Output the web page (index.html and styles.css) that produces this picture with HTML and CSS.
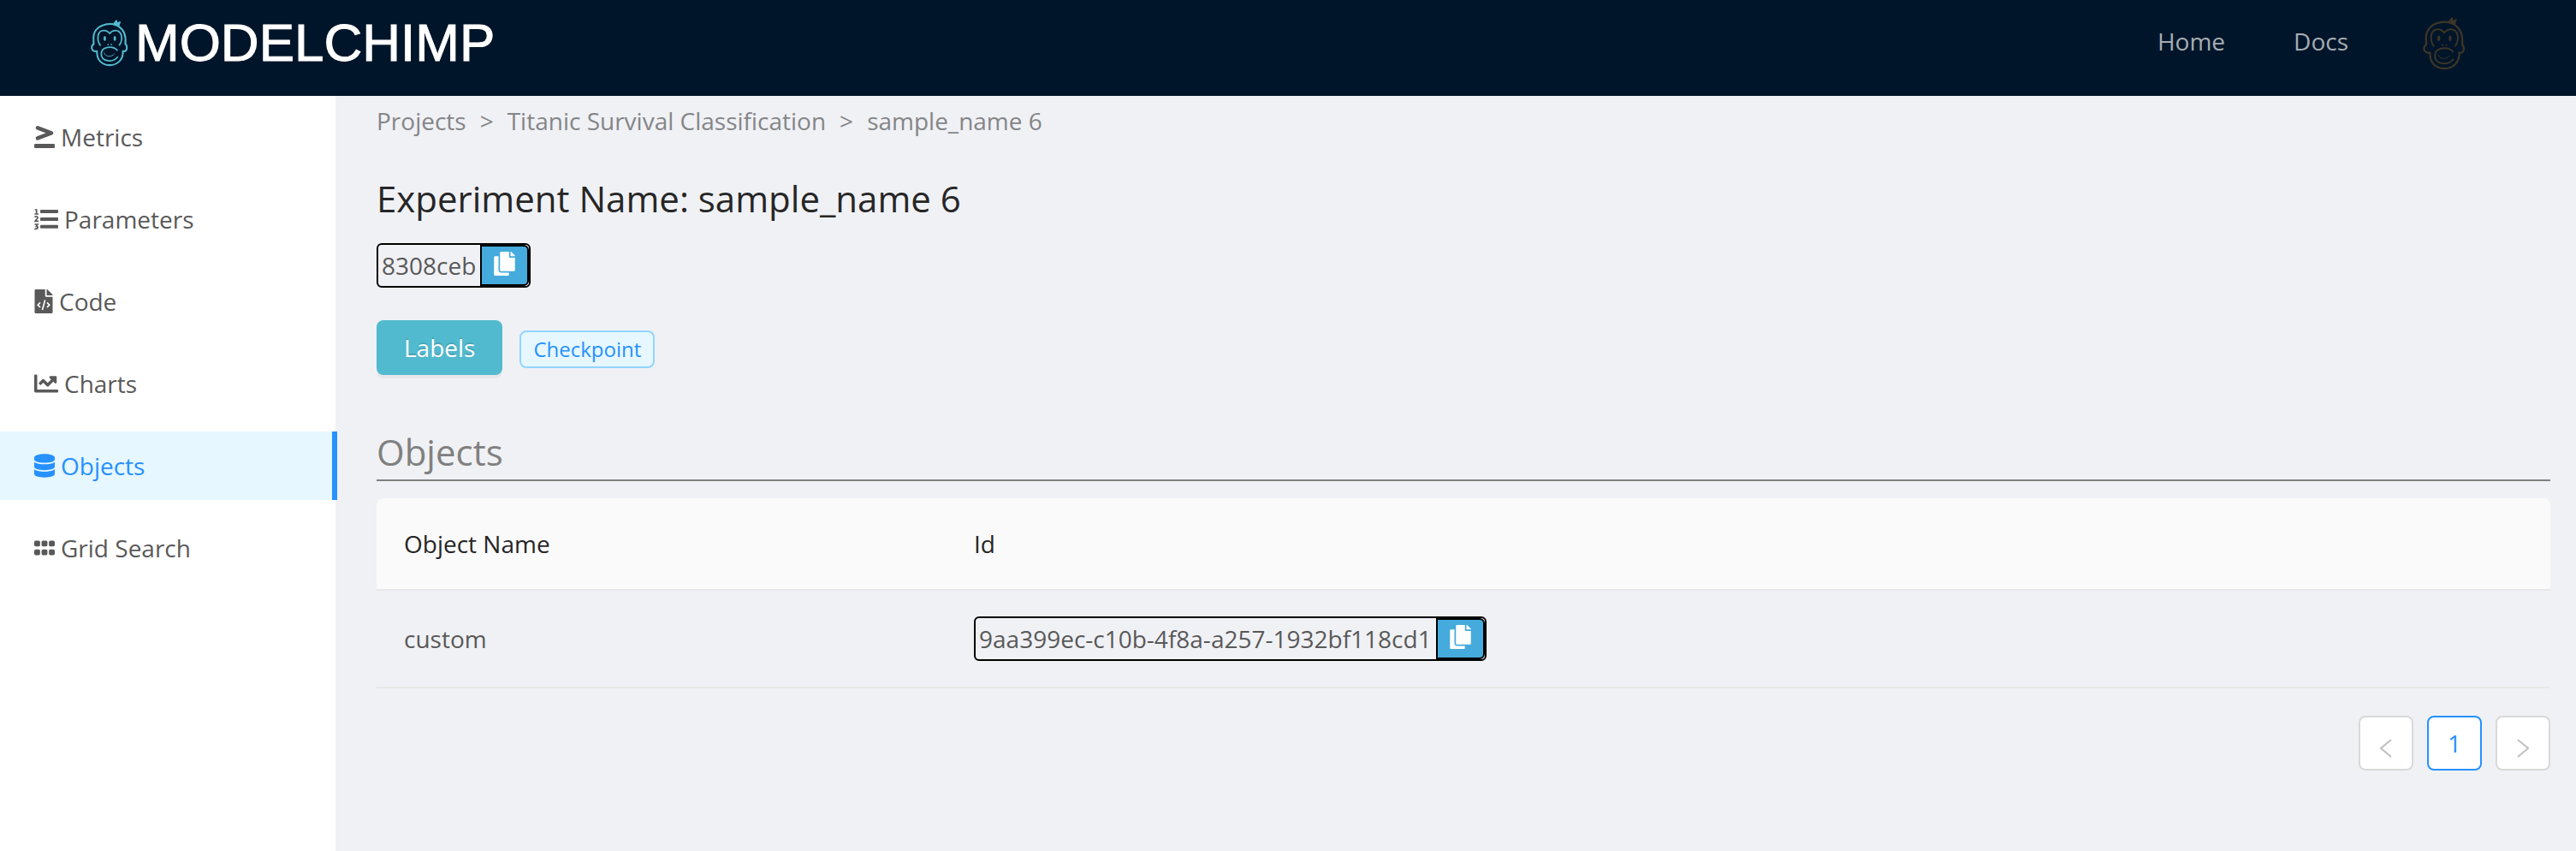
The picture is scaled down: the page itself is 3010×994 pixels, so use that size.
FILE: index.html
```html
<!DOCTYPE html>
<html lang="en">
<head>
<meta charset="utf-8">
<title>ModelChimp</title>
<link rel="stylesheet" href="styles.css">
</head>
<body>
<svg class="defs" aria-hidden="true">
  <symbol id="chimp" viewBox="0 0 150 190">
    <g fill="none" stroke="currentColor" stroke-width="7" stroke-linejoin="round">
      <path d="M92 21C84 20 66 19 52 24C26 32 10 52 11 78L12 100C4 103 4 110 4 116C6 126 14 131 25 128C23 162 44 184 75 184C106 184 131 162 128 128C138 131 144 124 144 116C144 108 142 102 138 100C142 66 134 44 110 29L115 14L104 20L102 8L92 21"/>
      <path stroke-width="6" d="M39 107C22 82 26 46 52 46C64 46 70 50 75 58C82 50 88 46 98 46C126 46 130 84 113 106"/>
      <path stroke-width="6" d="M107 126C88 104 42 110 42 139C42 172 92 175 108 150"/>
      <path stroke-width="3" d="M53 134C60 154 84 152 95 138"/>
    </g>
    <g fill="currentColor">
      <ellipse cx="56" cy="78" rx="5" ry="10"/>
      <ellipse cx="96" cy="78" rx="5" ry="10"/>
      <circle cx="69" cy="102" r="3"/>
      <circle cx="82" cy="102" r="3"/>
      <path d="M88 24L104 4L106 16L120 10L110 32Z"/>
    </g>
  </symbol>
  <symbol id="copy" viewBox="0 0 448 512">
    <path fill="currentColor" d="M320 448v40c0 13.255-10.745 24-24 24H24c-13.255 0-24-10.745-24-24V120c0-13.255 10.745-24 24-24h72v296c0 30.879 25.121 56 56 56h168zm0-344V0H152c-13.255 0-24 10.745-24 24v368c0 13.255 10.745 24 24 24h272c13.255 0 24-10.745 24-24V128H344c-13.2 0-24-10.8-24-24zm120.971-31.029L375.029 7.029A24 24 0 0 0 358.059 0H352v96h96v-6.059a24 24 0 0 0-7.029-16.97z"/>
  </symbol>
</svg>

<header class="topbar">
  <a class="brand" href="#"><svg class="brand-mark" aria-hidden="true"><use href="#chimp"/></svg><span>MODELCHIMP</span></a>
  <nav class="topnav" aria-label="Main">
    <a href="#">Home</a>
    <a href="#">Docs</a>
    <a class="avatar" href="#" aria-label="Account"><svg aria-hidden="true"><use href="#chimp"/></svg></a>
  </nav>
</header>

<div class="layout">
  <nav class="sidebar" aria-label="Experiment">
    <a class="item" href="#">
      <svg class="icon icon-md" viewBox="0 0 72 84" aria-hidden="true"><path d="M12 10L60 28L12 46" fill="none" stroke="currentColor" stroke-width="14" stroke-linecap="round" stroke-linejoin="round"/><rect y="66" width="72" height="15" rx="4" fill="currentColor"/></svg>
      Metrics</a>
    <a class="item" href="#">
      <svg class="icon icon-lg" viewBox="0 0 84 84" aria-hidden="true"><g fill="currentColor"><rect x="21" y="9" width="63" height="12" rx="3"/><rect x="21" y="36" width="63" height="12" rx="3"/><rect x="21" y="62" width="63" height="12" rx="3"/></g><path d="M2 9H8V23M1 24H15M1 34C8 31 13 33 12 38L3 49H15M1 60H12L7 67C16 67 14 78 1 76" fill="none" stroke="currentColor" stroke-width="5"/></svg>
      Parameters</a>
    <a class="item" href="#">
      <svg class="icon icon-sm" viewBox="0 0 384 512" aria-hidden="true"><path fill="currentColor" d="M384 121.941V128H256V0h6.059c6.365 0 12.47 2.529 16.971 7.029l97.941 97.941A24.005 24.005 0 0 1 384 121.941zM248 160c-13.2 0-24-10.8-24-24V0H24C10.745 0 0 10.745 0 24v464c0 13.255 10.745 24 24 24h336c13.255 0 24-10.745 24-24V160H248z"/><path d="M120 280L68 332L120 384M264 280L316 332L264 384M222 226L164 438" fill="none" stroke="#fff" stroke-width="30"/></svg>
      Code</a>
    <a class="item" href="#">
      <svg class="icon icon-lg" viewBox="0 0 512 512" aria-hidden="true"><path fill="currentColor" d="M496 384H64V80c0-8.84-7.16-16-16-16H16C7.16 64 0 71.16 0 80v336c0 17.67 14.33 32 32 32h464c8.84 0 16-7.16 16-16v-32c0-8.84-7.16-16-16-16zM464 96H345.94c-21.38 0-32.09 25.85-16.97 40.97l32.4 32.4L288 242.75l-73.37-73.37c-12.5-12.5-32.76-12.5-45.25 0l-68.69 68.69c-6.25 6.25-6.25 16.38 0 22.63l22.62 22.62c6.25 6.25 16.38 6.25 22.63 0L192 237.25l73.37 73.37c12.5 12.5 32.76 12.5 45.25 0l96-96 32.4 32.4c15.12 15.12 40.97 4.41 40.97-16.97V112c.01-8.84-7.15-16-15.99-16z"/></svg>
      Charts</a>
    <a class="item item-active" href="#" aria-current="page">
      <svg class="icon icon-md" viewBox="0 0 448 512" aria-hidden="true"><path fill="currentColor" d="M448 73.143v45.714C448 159.143 347.667 192 224 192S0 159.143 0 118.857V73.143C0 32.857 100.333 0 224 0s224 32.857 224 73.143zM448 176v102.857C448 319.143 347.667 352 224 352S0 319.143 0 278.857V176c48.125 33.143 136.208 48.572 224 48.572S399.874 209.143 448 176zm0 160v102.857C448 479.143 347.667 512 224 512S0 479.143 0 438.857V336c48.125 33.143 136.208 48.572 224 48.572S399.874 369.143 448 336z"/></svg>
      Objects</a>
    <a class="item" href="#">
      <svg class="icon icon-md" viewBox="0 0 448 512" aria-hidden="true"><g fill="currentColor"><rect y="96" width="128" height="128" rx="32"/><rect x="160" y="96" width="128" height="128" rx="32"/><rect x="320" y="96" width="128" height="128" rx="32"/><rect y="288" width="128" height="128" rx="32"/><rect x="160" y="288" width="128" height="128" rx="32"/><rect x="320" y="288" width="128" height="128" rx="32"/></g></svg>
      Grid Search</a>
  </nav>

  <main class="content">
    <nav class="crumbs" aria-label="Breadcrumb">
      <a href="#">Projects</a><span>&gt;</span><a href="#">Titanic Survival Classification</a><span>&gt;</span><a href="#">sample_name 6</a>
    </nav>
    <h1 class="title">Experiment Name: sample_name 6</h1>
    <div class="copybox"><span class="copy-text">8308ceb</span><button class="copy-btn" type="button" aria-label="Copy experiment id"><svg aria-hidden="true"><use href="#copy"/></svg></button></div>
    <div class="labels">
      <button class="labels-btn" type="button">Labels</button>
      <span class="tag">Checkpoint</span>
    </div>
    <h2 class="section">Objects</h2>
    <table class="table">
      <thead><tr><th class="col-name" scope="col">Object Name</th><th scope="col">Id</th></tr></thead>
      <tbody><tr><td>custom</td><td><div class="copybox"><span class="copy-text">9aa399ec-c10b-4f8a-a257-1932bf118cd1</span><button class="copy-btn" type="button" aria-label="Copy object id"><svg aria-hidden="true"><use href="#copy"/></svg></button></div></td></tr></tbody>
    </table>
    <nav class="pager" aria-label="Pagination">
      <button type="button" class="page page-off" disabled aria-label="Previous page"><svg viewBox="0 0 24 24" aria-hidden="true"><path d="M18 2L6 12L18 22"/></svg></button>
      <button type="button" class="page page-on" aria-current="page">1</button>
      <button type="button" class="page page-off" disabled aria-label="Next page"><svg viewBox="0 0 24 24" aria-hidden="true"><path d="M6 2L18 12L6 22"/></svg></button>
    </nav>
  </main>
</div>
</body>
</html>
```

FILE: styles.css
```css
* { box-sizing: border-box; }

body {
  margin: 0;
  min-height: 100vh;
  display: flex;
  flex-direction: column;
  background: #f0f1f5;
  color: #595959;
  font: 28px/42px "Open Sans", "Noto Sans", sans-serif;
}

a { color: inherit; text-decoration: none; }
button { font: inherit; margin: 0; }
.defs { position: absolute; width: 0; height: 0; }

.topbar {
  height: 112px;
  display: flex;
  justify-content: space-between;
  align-items: flex-start;
  padding: 0 122px 0 106px;
  background: #001529;
}

.brand {
  display: flex;
  align-items: center;
  gap: 8px;
  height: 100px;
  color: #fff;
  font: 62px/100px "Liberation Sans", Arial, sans-serif;
  -webkit-text-stroke: 1px #fff;
}

.brand-mark { width: 44px; height: 58px; color: #52bace; }

.topnav {
  display: flex;
  align-items: center;
  gap: 80px;
  height: 96px;
  color: #a6adb4;
}

.avatar {
  display: flex;
  justify-content: center;
  width: 64px;
  padding-top: 4px;
  color: #3c3528;
}

.avatar svg { width: 50px; height: 63px; }

.layout { flex: 1; display: flex; }

.sidebar {
  width: 392px;
  flex: none;
  display: flex;
  flex-direction: column;
  gap: 16px;
  padding-top: 8px;
  background: #fff;
}

.item {
  display: flex;
  align-items: center;
  gap: 7px;
  height: 80px;
  padding-left: 40px;
}

.item-active {
  margin-right: -2px;
  border-right: 6px solid #2691ff;
  background: #e6f7ff;
  color: #2691ff;
}

.icon { height: 28px; flex: none; }
.icon-sm { width: 22px; }
.icon-md { width: 24px; }
.icon-lg { width: 28px; }

.content { flex: 1; padding: 8px 30px 48px 48px; }

.crumbs { display: flex; gap: 16px; color: #848587; }

.title {
  margin: 38px 0 20px;
  color: #262626;
  font-size: 42px;
  font-weight: 500;
  line-height: 64px;
}

.copybox {
  display: flex;
  width: fit-content;
  height: 52px;
  border: 2px solid #000;
  border-radius: 6px;
}

.copy-text { padding: 0 5px 0 4px; line-height: 48px; }

.copy-btn {
  display: flex;
  align-items: center;
  justify-content: center;
  width: 57px;
  padding: 0 0 4px;
  border: 2px solid #000;
  border-radius: 0 6px 6px 0;
  background: #45abdc;
  color: #fff;
}

.copy-btn svg { width: 25px; height: 28px; }

.labels { display: flex; align-items: center; gap: 20px; margin-top: 38px; }

.labels-btn {
  height: 64px;
  padding: 0 32px;
  border: 0;
  border-radius: 8px;
  background: #52bace;
  box-shadow: 0 4px 0 rgba(0, 0, 0, 0.045);
  color: #fff;
  font-weight: 500;
  text-shadow: 0 -2px 0 rgba(0, 0, 0, 0.12);
}

.tag {
  margin-top: 4px;
  padding: 0 14px;
  border: 2px solid #91d5ff;
  border-radius: 8px;
  background: #e6f7ff;
  color: #2691ff;
  font-size: 24px;
  line-height: 40px;
}

.section {
  margin: 58px 0 20px;
  border-bottom: 2px solid #808080;
  color: #808080;
  font-size: 42px;
  font-weight: 500;
  line-height: 64px;
}

.table { width: 100%; border-collapse: separate; border-spacing: 0; }

.table th,
.table td {
  padding: 30px 32px;
  border-bottom: 2px solid #e8e8e8;
  text-align: left;
}

.table th {
  padding: 32px;
  background: #fafafa;
  color: #262626;
  font-weight: 500;
}

.table th:first-child { border-top-left-radius: 8px; }
.table th:last-child { border-top-right-radius: 8px; }
.col-name { width: 666px; }

.pager { display: flex; justify-content: flex-end; gap: 16px; margin-top: 32px; }

.page {
  display: flex;
  align-items: center;
  justify-content: center;
  width: 64px;
  height: 64px;
  padding: 0;
  border: 2px solid #d9d9d9;
  border-radius: 8px;
  background: #fff;
}

.page-on { border-color: #2691ff; color: #2691ff; font-weight: 500; }
.page-off { padding-top: 12px; }

.page svg {
  width: 24px;
  height: 24px;
  fill: none;
  stroke: #bfbfbf;
  stroke-width: 2;
}
```
